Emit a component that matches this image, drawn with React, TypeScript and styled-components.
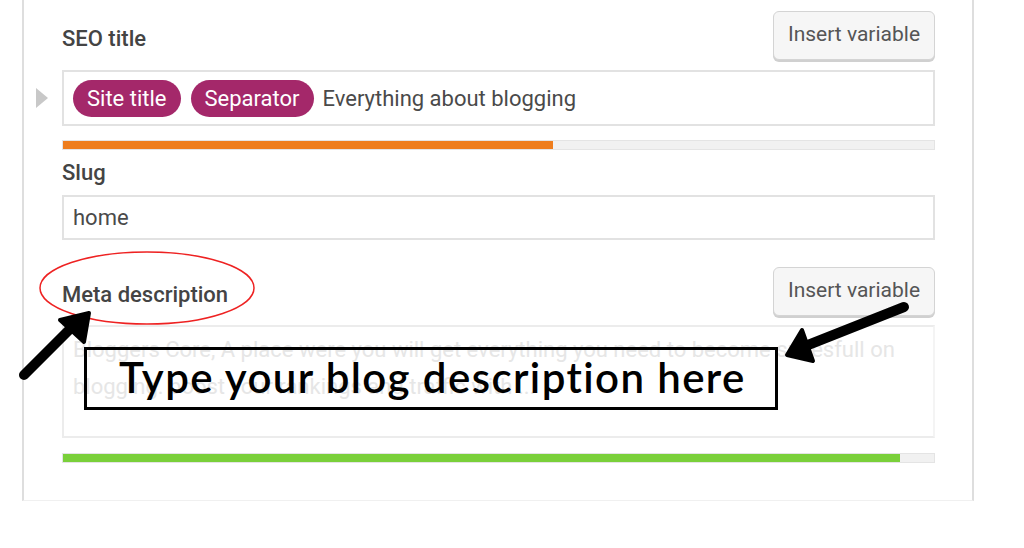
import React from "react";
import styled, { createGlobalStyle } from "styled-components";

const Global = createGlobalStyle`
  html, body { margin: 0; padding: 0; background: #fff; }
  body { width: 1024px; height: 548px; overflow: hidden; font-family: Roboto, "Liberation Sans", sans-serif; }
`;

const Page = styled.div`
  position: relative;
  width: 1024px;
  height: 548px;
  padding-left: 22px;
  box-sizing: border-box;
`;

const Panel = styled.div`
  width: 952px;
  height: 501px;
  box-sizing: border-box;
  border-left: 2px solid #dedede;
  border-right: 2px solid #dedede;
  border-bottom: 1px solid #f0f0f0;
  padding: 11px 37px 0 38px;
  display: flex;
  flex-direction: column;
`;

const HeaderRow = styled.div<{ $top?: number }>`
  display: flex;
  align-items: center;
  justify-content: space-between;
  height: 49px;
  margin-top: ${(p) => p.$top ?? 0}px;
`;

const Label = styled.div`
  font-size: 22px;
  font-weight: 500;
  color: #444;
  line-height: 26px;
  padding-top: 6px;
`;

const SlugLabel = styled(Label)`
  margin: 10px 0 9px;
  padding-top: 0;
`;

const InsertButton = styled.button`
  height: 49px;
  width: 162px;
  box-sizing: border-box;
  border: 1px solid #d4d4d4;
  border-radius: 6px;
  background: #f6f6f6;
  box-shadow: 0 2px 0 #d0d0d0;
  color: #555;
  font-family: Roboto, "Liberation Sans", sans-serif;
  font-size: 21px;
  padding: 0 0 4px;
  cursor: pointer;
`;

const InputBox = styled.div<{ $h: number; $mt: number }>`
  position: relative;
  height: ${(p) => p.$h}px;
  margin-top: ${(p) => p.$mt}px;
  box-sizing: border-box;
  border: 2px solid #e2e2e2;
  display: flex;
  align-items: center;
  gap: 10px;
  padding: 0 9px;
  font-size: 22px;
  color: #4a4a4a;
`;

const Marker = styled.span`
  position: absolute;
  left: -28px;
  top: 50%;
  transform: translateY(-50%);
  width: 0;
  height: 0;
  border-top: 10px solid transparent;
  border-bottom: 10px solid transparent;
  border-left: 12px solid #c8c8c8;
`;

const Pill = styled.span`
  display: inline-flex;
  align-items: center;
  height: 37px;
  padding: 0 14px;
  border-radius: 19px;
  background: #a4286a;
  color: #fff;
  font-size: 22px;
`;

const PlainText = styled.span`
  margin-left: -1px;
`;

const TextArea = styled.div`
  height: 113px;
  margin-top: 9px;
  box-sizing: border-box;
  border: 2px solid #ececec;
  border-right-color: #f4f4f4;
  padding: 4px 10px 0 9px;
  font-size: 22px;
  line-height: 37px;
  color: #e6e6e6;
`;

const Bar = styled.div<{ $mt: number }>`
  height: 10px;
  margin-top: ${(p) => p.$mt}px;
  box-sizing: border-box;
  border: 1px solid #e4e4e4;
  background: #f1f1f1;
  display: flex;
`;

const Fill = styled.div<{ $color: string }>`
  background: ${(p) => p.$color};
  height: 100%;
`;

const Overlay = styled.svg`
  position: absolute;
  left: 0;
  top: 0;
  pointer-events: none;
`;

const Callout = styled.div`
  position: absolute;
  left: 84px;
  top: 347px;
  width: 694px;
  height: 63px;
  box-sizing: border-box;
  border: 3px solid #000;
  padding-left: 32px;
  font-family: Lato, "Open Sans", sans-serif;
  font-weight: 600;
  font-size: 42px;
  letter-spacing: 1.4px;
  line-height: 55px;
  color: #000;
  white-space: nowrap;
`;

export default function App() {
  return (
    <Page>
      <Global />
      <Panel>
        <HeaderRow>
          <Label>SEO title</Label>
          <InsertButton>Insert variable</InsertButton>
        </HeaderRow>
        <InputBox $h={56} $mt={10}>
          <Marker />
          <Pill>Site title</Pill>
          <Pill>Separator</Pill>
          <PlainText>Everything about blogging</PlainText>
        </InputBox>
        <Bar $mt={14}>
          <Fill $color="#ee7d1d" style={{ width: "56.3%" }} />
        </Bar>
        <SlugLabel>Slug</SlugLabel>
        <InputBox $h={45} $mt={0}>home</InputBox>
        <HeaderRow $top={27}>
          <Label>Meta description</Label>
          <InsertButton>Insert variable</InsertButton>
        </HeaderRow>
        <TextArea>
          Bloggers Core, A place were you will get everything you need to become sucesfull on
          blogging. boost your rankings and traffic with ...
        </TextArea>
        <Bar $mt={15}>
          <Fill $color="#7ad03a" style={{ width: "96.1%" }} />
        </Bar>
      </Panel>
      <Overlay width="1024" height="548" viewBox="0 0 1024 548">
        <ellipse cx="147" cy="288" rx="107" ry="36" fill="none" stroke="#ee2222" strokeWidth="1.5" />
        <line x1="24" y1="375" x2="72" y2="327" stroke="#000" strokeWidth="10" strokeLinecap="round" />
        <polygon points="89,313 60,320 84,342" fill="#000" stroke="#000" strokeWidth="4" strokeLinejoin="round" />
        <line x1="904" y1="307" x2="808" y2="345" stroke="#000" strokeWidth="10" strokeLinecap="round" />
        <polygon points="787,355 802,330 813,361" fill="#000" stroke="#000" strokeWidth="4" strokeLinejoin="round" />
      </Overlay>
      <Callout>Type your blog description here</Callout>
    </Page>
  );
}
